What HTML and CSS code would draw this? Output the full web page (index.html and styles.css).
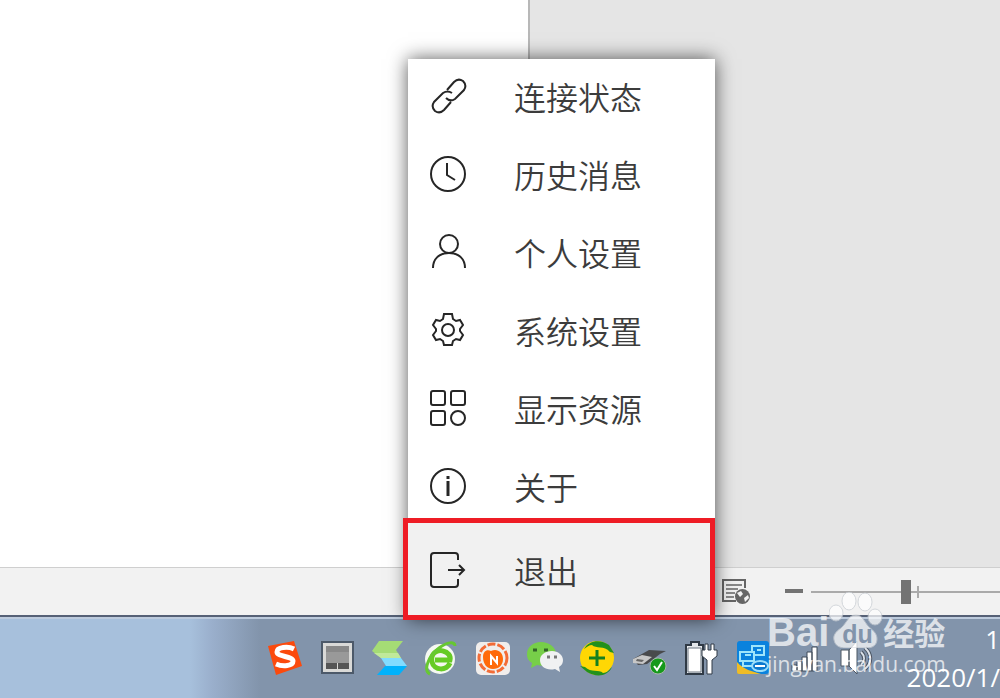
FILE: index.html
```html
<!DOCTYPE html>
<html lang="zh-CN">
<head>
  <meta charset="UTF-8">
  <meta name="viewport" content="width=device-width, initial-scale=1.0">
  <title>退出</title>
  <link rel="stylesheet" href="styles.css">
</head>
<body>
  <main class="workspace">
    <div class="page"></div>
  </main>

  <div class="statusbar">
    <button class="view-btn" aria-label="Web 版式">
      <svg width="30" height="28" viewBox="0 0 30 28" fill="none" stroke="#666" stroke-width="2">
        <path d="M24 10V2H2v21h13"/>
        <path d="M5 7h16M5 11h12M5 15h9M5 19h8" stroke-width="1.6"/>
        <circle cx="21.500" cy="18.500" r="7.500" fill="#666" stroke="none"/>
        <path d="M16 15l4-2 2 3-3 3zM23 20l4-3 1 3-4 4z" fill="#f2f2f2" stroke="none"/>
      </svg>
    </button>
    <button class="zoom-out" aria-label="缩小"><span></span></button>
    <label class="zoom">
      <input type="range" min="0" max="200" value="101" aria-label="缩放">
    </label>
  </div>

  <footer class="taskbar">
    <div class="tray">
      <svg viewBox="0 0 36 36">
        <path d="M1 6L27 1l8 25L9 35z" fill="#fb4a0d"/>
        <path d="M27 9c-6-3-17-2-17 3s16 4 16 9-10 6-17 3" fill="none" stroke="#fff" stroke-width="5"/>
      </svg>
      <svg viewBox="0 0 36 36">
        <path d="M2 1h33v33H2z" fill="#4c5969"/>
        <path d="M4 3h29v29H4z" fill="#d9d9d7"/>
        <path d="M7 6h23v17H7z" fill="#999"/>
        <path d="M7 6h23v6H7z" fill="#888"/>
        <path d="M7 23h11v6H7zM19 23h11v6H19z" fill="#555"/>
      </svg>
      <svg viewBox="0 0 36 36">
        <path d="M8 1h24l-7 9 5 8H10L1 11z" fill="#a5dc75"/>
        <path d="M3 13h24l3 5H10z" fill="#c0e99a"/>
        <path d="M10 18h20l6 8H15z" fill="#81dcff"/>
        <path d="M14 26h22l-8 9H6z" fill="#00b2fc"/>
      </svg>
      <svg viewBox="0 0 36 36">
        <circle cx="17" cy="19" r="15" fill="#f5f8f1"/>
        <path d="M27 23c-3 8-16 8-18-1-2-8 5-13 11-11 5 1 8 5 7 9H12" fill="none" stroke="#66cb25" stroke-width="5"/>
        <path d="M7 34C0 31 5 16 16 8 24 2 32 1 32 6" fill="none" stroke="#67c832" stroke-width="3"/>
      </svg>
      <svg viewBox="0 0 36 36">
        <rect x="1" y="2" width="34" height="33" rx="5" fill="#f1eeec"/>
        <circle cx="18" cy="18" r="14" fill="none" stroke="#f36c37" stroke-width="3" stroke-dasharray="8 2"/>
        <path d="M8 17c0-6 4-8 8-6 6-3 12 1 12 8 0 6-4 10-10 10S8 24 8 17z" fill="#ff6a0a"/>
        <path d="M16 25v-9l6 7v-7" fill="none" stroke="#fff" stroke-width="2"/>
      </svg>
      <svg viewBox="0 0 36 36">
        <path d="M14 2C6 2 0 7 0 14c0 5 2 7 5 9l-1 5 6-3c11 3 19-3 19-11C29 7 22 2 14 2z" fill="#77cf49"/>
        <path d="M6 10h4M17 10h4" stroke="#326329" stroke-width="3"/>
        <path d="M25 11c-7 0-12 4-12 9 0 7 7 11 15 9l5 3-1-5c3-2 4-4 4-7 0-5-5-9-11-9z" fill="#f0f1f2"/>
        <path d="M20 17h3M27 17h3" stroke="#777" stroke-width="3"/>
      </svg>
      <svg viewBox="0 0 36 36">
        <circle cx="18" cy="18" r="17" fill="#ffd704"/>
        <path d="M5 9C10 0 22-1 30 5l5 8-4-1c-6-7-14-3-18-7-3 0-5 2-8 4zM1 26l5 1c6 6 14 2 18 6 4 0 6-3 9-6C29 36 18 38 8 32z" fill="#23911d"/>
        <path d="M18 10v16M10 18h16" stroke="#16801f" stroke-width="3"/>
      </svg>
      <svg viewBox="0 0 36 36">
        <path d="M2 19l16-9 17 1-6 3-13 10-9 1z" fill="#494a4c"/>
        <path d="M2 19l9-4 10 2-9 7-10-1z" fill="#c7c7c7"/>
        <path d="M6 19l7 1-2 2-6-1z" fill="#666"/>
        <circle cx="27" cy="26" r="8" fill="#16991b" stroke="#aab8aa"/>
        <path d="M23 26l3 4 5-8" fill="none" stroke="#fff" stroke-width="2"/>
      </svg>
      <svg viewBox="0 0 36 36">
        <path d="M3 5h5V2h8v3h4v29H3z" fill="#e5e8eb" stroke="#303a46" stroke-width="2"/>
        <path d="M5 8h13v24H5z" fill="#fff" stroke="#6c7681"/>
        <path d="M22 4v6h-3v6l5 4v14h5V20l5-4v-6h-3V4h-3v6h-3V4z" fill="#fff" stroke="#303a46"/>
      </svg>
      <svg viewBox="0 0 36 36">
        <rect x="2" y="1" width="32" height="33" rx="3" fill="#0a82dd"/>
        <path d="M2 22c7 8 15 9 24 12H4c-2 0-2-1-2-3z" fill="#efbc26"/>
        <path d="M5 12h14v9H5zM17 11V6h12v9h-9M8 21v5h12M10 15h6M22 10h4" fill="none" stroke="#9ee5fb" stroke-width="2"/>
        <ellipse cx="25" cy="26" rx="8" ry="5" fill="#0b79cf" stroke="#9bddf8" stroke-width="2"/>
        <path d="M20 26h10" stroke="#fff" stroke-width="2"/>
      </svg>
      <svg viewBox="0 0 36 36" fill="#fff" stroke="#3f4a58">
        <path d="M5 25h5v6H5zM10 21h5v10h-5zM15 17h5v14h-5zM20 12h5v19h-5zM25 7h5v24h-5z"/>
      </svg>
      <svg viewBox="0 0 36 36" fill="#fff" stroke="#4b5663">
        <path d="M2 10h8v16H2zM10 10l8-9v33l-8-8z"/>
        <path d="M22 12c4 4 4 9 0 13M26 8c7 6 7 15 0 21" fill="none" stroke="#4b5663" stroke-width="4"/>
        <path d="M22 12c4 4 4 9 0 13M26 8c7 6 7 15 0 21" fill="none" stroke="#dbe2ea" stroke-width="2"/>
      </svg>
    </div>
    <div class="clock">
      <span>1</span>
      <span>2020/1/</span>
    </div>
  </footer>

  <ul class="tray-menu">
    <li><button>
      <svg viewBox="0 0 38 38"><path d="M18 13l7-8c3-3 6-3 9-1 3 3 3 6 1 9l-9 9c-3 2-6 2-9-1M22 25l-7 8c-3 3-6 3-9 1-3-3-3-6-1-9l9-9c3-2 6-2 9 0"/></svg>
      连接状态
    </button></li>
    <li><button>
      <svg viewBox="0 0 38 38"><circle cx="19" cy="19" r="17"/><path d="M18 8v12l8 5"/></svg>
      历史消息
    </button></li>
    <li><button>
      <svg viewBox="0 0 38 38"><circle cx="20" cy="11" r="9"/><path d="M4 35c0-9 6-15 16-15s16 6 16 15"/></svg>
      个人设置
    </button></li>
    <li><button>
      <svg viewBox="0 0 38 38"><path d="M15 3h8l1 5 3 2 4-1 3 5-3 4v2l3 4-3 5-4-1-3 2-1 4h-8l-1-4-3-2-4 1-3-5 3-4v-2l-3-4 3-5 4 1 3-2z"/><circle cx="19" cy="19" r="6"/></svg>
      系统设置
    </button></li>
    <li><button>
      <svg viewBox="0 0 38 38"><rect x="2" y="2" width="14" height="14" rx="2"/><rect x="22" y="2" width="14" height="14" rx="2"/><rect x="2" y="22" width="14" height="14" rx="2"/><circle cx="29" cy="29" r="7"/></svg>
      显示资源
    </button></li>
    <li><button>
      <svg viewBox="0 0 38 38"><circle cx="19" cy="19" r="17"/><path d="M19 14v15M19 9v3" stroke-width="3"/></svg>
      关于
    </button></li>
    <li class="exit"><button>
      <svg viewBox="0 0 38 38"><path d="M29 9V5q0-3-3-3H5Q2 2 2 5v28q0 3 3 3h21q3 0 3-3v-5M19 19h16M30 14l5 5-5 5"/></svg>
      退出
    </button></li>
  </ul>

  <div class="watermark">
    <div class="brand">
      <span>Bai</span>
      <span class="paw">
        <svg viewBox="0 0 54 56">
          <ellipse cx="7" cy="21" rx="7" ry="8"/>
          <ellipse cx="20" cy="9" rx="7" ry="9"/>
          <ellipse cx="36" cy="10" rx="7" ry="9"/>
          <ellipse cx="46" cy="25" rx="7" ry="8"/>
          <path d="M27 23c-8 0-9 8-15 13-6 4-8 8-7 12 1 6 6 8 12 8h20c7 0 11-3 11-9 0-5-3-8-8-12-5-5-6-12-13-12z"/>
        </svg>
        <b>du</b>
      </span>
      <span class="cn">经验</span>
    </div>
    <div class="site">jingyan.baidu.com</div>
  </div>
</body>
</html>
```
FILE: styles.css
```css
* {
  box-sizing: border-box;
}

body {
  margin: 0;
  min-height: 100vh;
  display: flex;
  flex-direction: column;
  position: relative;
  overflow: hidden;
  font-family: "Open Sans", "Noto Sans CJK SC", sans-serif;
}

button {
  padding: 0;
  border: 0;
  background: none;
  font: inherit;
  color: inherit;
}

.workspace {
  flex: 1;
  display: flex;
  background: #e5e5e5;
}

.page {
  width: 53%;
  background: #fff;
  border-right: 2px solid #b8b8b8;
}

.statusbar {
  height: 48px;
  display: flex;
  align-items: center;
  padding-left: 721px;
  background: #f2f2f2;
  border-top: 1px solid #cfcfcf;
}

.view-btn {
  display: flex;
}

.zoom-out {
  width: 18px;
  height: 4px;
  margin: 0 8px 2px 34px;
}

.zoom-out span {
  display: block;
  height: 4px;
  background: #737373;
}

.zoom {
  flex: 1;
  display: flex;
  position: relative;
}

/* 100% mark */
.zoom::after {
  content: "";
  position: absolute;
  left: 56%;
  top: 6px;
  width: 2px;
  height: 12px;
  background: #aaa;
}

.zoom input {
  appearance: none;
  width: 100%;
  height: 24px;
  margin: 0;
  background: linear-gradient(#aaa, #aaa) center / 100% 2px no-repeat;
}

.zoom input::-webkit-slider-thumb {
  appearance: none;
  width: 10px;
  height: 24px;
  background: #737373;
}

.taskbar {
  height: 83px;
  display: flex;
  align-items: center;
  justify-content: space-between;
  padding-left: 267px;
  background: linear-gradient(90deg, #a7c0dc 190px, #9aafcc 212px, #8294ab 260px);
  border-top: 2px solid #566176;
  box-shadow: inset 0 2px #bdcbdd;
}

.tray {
  display: flex;
  gap: 16px;
}

.tray svg {
  width: 36px;
  height: 36px;
}

.clock {
  display: flex;
  flex-direction: column;
  align-items: flex-end;
  font-size: 26px;
  line-height: 38px;
  color: #fff;
}

.tray-menu {
  position: absolute;
  left: 408px;
  bottom: 79px;
  width: 307px;
  margin: 0;
  padding: 3px 0 0;
  list-style: none;
  background: #fff;
  box-shadow: 0 0 18px rgba(0, 0, 0, 0.65);
}

.tray-menu li {
  height: 70px;
  margin-bottom: 8px;
}

.tray-menu li:nth-last-child(2) {
  margin-bottom: 1px;
}

.tray-menu button {
  width: 100%;
  height: 100%;
  display: flex;
  align-items: center;
  gap: 47px;
  padding: 0 0 2px 21px;
  font-family: "Noto Sans CJK SC", sans-serif;
  font-size: 32px;
  line-height: 40px;
  font-weight: 350;
  color: #3c3c3c;
}

.tray-menu svg {
  width: 38px;
  height: 38px;
  fill: none;
  stroke: #262626;
  stroke-width: 2;
}

.tray-menu .exit {
  height: 96px;
  margin: 0;
  position: relative;
  background: #f1f1f1;
}

/* red highlight round the exit row */
.exit::after {
  content: "";
  position: absolute;
  inset: -5px 0 -1px -5px;
  border: 5px solid #ee1c25;
  pointer-events: none;
}

.watermark {
  position: absolute;
  left: 767px;
  bottom: 22px;
  color: #fff;
  opacity: 0.72;
}

.brand {
  display: flex;
  align-items: flex-end;
  font: bold 40px/40px "Liberation Sans", sans-serif;
}

.paw {
  position: relative;
  display: flex;
  margin-bottom: 4px;
}

.paw svg {
  width: 54px;
  height: 56px;
  fill: #fff;
  stroke: #c8cdd3;
}

.paw b {
  position: absolute;
  left: 13px;
  bottom: 0;
  font-size: 25px;
  line-height: 28px;
  color: #8294ab;
}

.cn {
  font-family: "Noto Sans CJK SC", sans-serif;
  font-size: 31px;
}

.site {
  font-size: 21px;
  line-height: 24px;
}
```
